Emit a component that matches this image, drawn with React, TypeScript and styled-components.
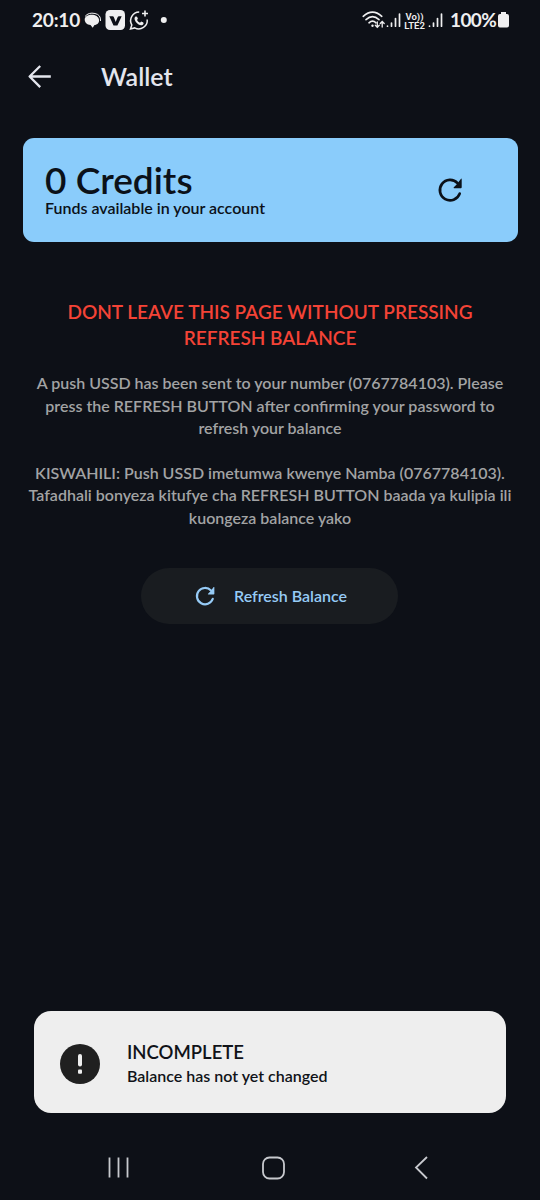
import React from "react";
import styled, { createGlobalStyle } from "styled-components";

const GlobalStyle = createGlobalStyle`
  * { box-sizing: border-box; }
  body { margin: 0; background: #0d1017; }
  svg { display: block; flex: none; }
`;

const Screen = styled.div`
  width: 540px;
  height: 1200px;
  display: flex;
  flex-direction: column;
  background: #0d1017;
  color: #e4e6ee;
  font-family: Lato, "Open Sans", sans-serif;
  font-weight: 500;
  overflow: hidden;
`;

const Line = styled.span<{ $spacing?: number }>`
  display: block;
  white-space: nowrap;
  letter-spacing: ${(p) => p.$spacing ?? 0}px;
`;

const StatusBar = styled.header`
  height: 40px;
  padding: 0 31px 0 32px;
  display: flex;
  align-items: center;
  justify-content: space-between;
  color: #efeff0;
`;

const StatusGroup = styled.div`
  display: flex;
  align-items: center;
`;

const StatusText = styled.span<{ $width: number; $spacing: number }>`
  width: ${(p) => p.$width}px;
  font-size: 19px;
  line-height: 40px;
  font-weight: 700;
  white-space: nowrap;
  letter-spacing: ${(p) => p.$spacing}px;
`;

const AppBar = styled.div`
  height: 72px;
  padding-left: 27px;
  display: flex;
  align-items: center;
  gap: 49px;
`;

const Title = styled.h1`
  margin: 0;
  font-size: 25px;
  line-height: 32px;
  font-weight: 600;
`;

const BalanceCard = styled.section`
  height: 104px;
  margin: 26px 22px 0 23px;
  padding: 0 53px 0 22px;
  border-radius: 11px;
  background: #8accfb;
  color: #0b1119;
  display: flex;
  align-items: center;
  justify-content: space-between;
`;

const Amount = styled.div`
  font-size: 37px;
  line-height: 36px;
  font-weight: 600;
`;

const Caption = styled.div`
  font-size: 16px;
  line-height: 20px;
  font-weight: 600;
`;

const Warning = styled.p`
  margin: 57px 0 0;
  text-align: center;
  color: #f44336;
  font-size: 19px;
  line-height: 25.5px;
  font-weight: 600;
`;

const Message = styled.p<{ $top: number }>`
  margin: ${(p) => p.$top}px 0 0;
  display: flex;
  flex-direction: column;
  align-items: center;
  color: #a2a3a4;
  font-size: 16px;
  line-height: 22.5px;
  font-weight: 600;
`;

const RefreshButton = styled.button`
  width: 257px;
  height: 56px;
  margin: 39px auto 0 141px;
  padding: 0 0 0 52px;
  border: 0;
  border-radius: 28px;
  display: flex;
  align-items: center;
  gap: 17px;
  background: #191c20;
  color: #96cbf6;
  font: 600 16px/22px Lato, sans-serif;
`;

const Toast = styled.aside`
  height: 102px;
  margin: auto 34px 0;
  padding-left: 24px;
  border-radius: 17px;
  display: flex;
  align-items: center;
  gap: 24px;
  background: #eee;
  color: #101318;
`;

const ToastTitle = styled.div`
  font-size: 18.5px;
  line-height: 28px;
  font-weight: 600;
`;

const NavBar = styled.nav`
  height: 87px;
  padding: 42px 110px 0 107px;
  display: flex;
  justify-content: space-between;
`;

const RefreshIcon = ({ size }: { size: number }) => (
  <svg width={size} height={size} viewBox="0 0 30 30" fill="none">
    <path d="M24.7 18.6A10.2 10.2 0 1 1 22.5 8.1" stroke="currentColor" strokeWidth="2.7" strokeLinecap="round" />
    <path d="M25.8 3.9q.9-.7.9.3v8.1q0 .9-.9.9h-6.6q-1.1 0-.4-.9l2.8-2.8z" fill="currentColor" />
  </svg>
);

const BackIcon = () => (
  <svg width="25" height="25" viewBox="0 0 25 25" fill="none" stroke="currentColor" strokeWidth="2.3" strokeLinejoin="round">
    <path d="M13.2 2 2.6 12.5l10.6 10.6M2.6 12.5h21.2" />
  </svg>
);

const NotificationIcons = () => (
  <svg width="88" height="24" viewBox="0 0 88 24">
    <path d="M4 8.5Q7.500 4 14 5.500 20 6.700 19.500 13" fill="none" stroke="#efeff0" strokeWidth="1" />
    <path d="M3.700 11.500C3.700 5 17.800 4.800 18.100 12.200c.1 3.200-2.200 4.500-4.600 4.800l-1.800 2.800-2.200-2.700c-3.500-.5-5.800-2.600-5.800-5.600Z" fill="#efeff0" />
    <rect x="24.500" y="2" width="19.500" height="20" rx="4.500" fill="#efeff0" />
    <path d="m28.300 8.200h3.300q1 0 1.300 1l1.800 4.700 1.900-4.700q.4-1 1.400-1h2.700l-4.300 9.200h-3.900z" fill="#0d1017" />
    <path d="M58.200 4.100a8.600 8.600 0 0 0-7.400 12.900l-1.300 4 4.200-1.100A8.500 8.500 0 0 0 66.200 11.500" fill="none" stroke="#efeff0" strokeWidth="1.500" />
    <path d="M54.600 8.600c1.500-.8 1.900.8 2.300 2.200l-.9 1.100q1.100 2 3 2.900l1.200-1.200c1.400.5 2.800 1 2.300 2.200-1.400 2.900-5.300 1-7.200-1.300-1.600-1.900-2.600-4.500-.7-5.900z" fill="#efeff0" />
    <path d="M64 2.500v6M61 5.500h6" stroke="#efeff0" strokeWidth="1.600" />
    <circle cx="82.800" cy="12" r="3" fill="#efeff0" />
  </svg>
);

const WifiIcon = () => (
  <svg width="24" height="20" viewBox="0 0 24 20" fill="none" stroke="currentColor" strokeWidth="1.600" strokeLinecap="round">
    <path d="M1.200 6.300Q10.500-2.200 19.800 6.300M4 9.600q6.500-5.900 13 0M7 12.800q3.500-3.300 7 0" />
    <circle cx="10.500" cy="15.700" r="1.200" fill="currentColor" stroke="none" />
    <path d="M15.300 11.800v5.500m-2-2 2 2 2-2M20.200 17v-5.500m-2 2 2-2 2 2" strokeWidth="1.300" />
  </svg>
);

const SignalIcon = () => (
  <svg width="16" height="16" viewBox="0 0 16 16" stroke="currentColor" strokeWidth="1.700" strokeLinecap="round">
    <path d="M1.500 14v.2M5.500 11v3.200M9.500 6.500v7.700M13.500 2v12.200" />
  </svg>
);

const NetworkLabel = styled.span`
  width: 21px;
  margin: 1px 3px 0 2px;
  text-align: center;
  font: 600 9.500px/9px Roboto, sans-serif;
`;

const BatteryIcon = () => (
  <svg width="11" height="16" viewBox="0 0 11 16" fill="currentColor">
    <path d="M3 0h5v2h1q2 0 2 2v9.500q0 2-2 2H2q-2 0-2-2V4q0-2 2-2h1z" />
  </svg>
);

export default function App() {
  return (
    <Screen>
      <GlobalStyle />
      <StatusBar>
        <StatusGroup>
          <StatusText $width={49} $spacing={-0.2}>20:10</StatusText>
          <NotificationIcons />
        </StatusGroup>
        <StatusGroup>
          <WifiIcon />
          <SignalIcon />
          <NetworkLabel>
            <Line>Vo))</Line>
            <Line>LTE2</Line>
          </NetworkLabel>
          <SignalIcon />
          <StatusText $width={48} $spacing={-0.6} style={{ marginLeft: 6 }}>100%</StatusText>
          <BatteryIcon />
        </StatusGroup>
      </StatusBar>
      <AppBar>
        <BackIcon />
        <Title>Wallet</Title>
      </AppBar>
      <BalanceCard>
        <div>
          <Amount>0 Credits</Amount>
          <Caption>Funds available in your account</Caption>
        </div>
        <RefreshIcon size={30} />
      </BalanceCard>
      <Warning>
        <Line>DONT LEAVE THIS PAGE WITHOUT PRESSING</Line>
        <Line>REFRESH BALANCE</Line>
      </Warning>
      <Message $top={22}>
        <Line>A push USSD has been sent to your number (0767784103). Please</Line>
        <Line>press the REFRESH BUTTON after confirming your password to</Line>
        <Line>refresh your balance</Line>
      </Message>
      <Message $top={22}>
        <Line>KISWAHILI: Push USSD imetumwa kwenye Namba (0767784103).</Line>
        <Line>Tafadhali bonyeza kitufye cha REFRESH BUTTON baada ya kulipia ili</Line>
        <Line>kuongeza balance yako</Line>
      </Message>
      <RefreshButton>
        <RefreshIcon size={24} />
        Refresh Balance
      </RefreshButton>
      <Toast>
        <svg width="45" height="45" viewBox="0 0 45 45">
          <circle cx="22" cy="24" r="20" fill="#202020" />
          <path d="M22 16v8.500" stroke="#eee" strokeWidth="4" strokeLinecap="round" />
          <rect x="20" y="29.500" width="4" height="4.200" rx="1" fill="#eee" />
        </svg>
        <div>
          <ToastTitle>INCOMPLETE</ToastTitle>
          <Caption>Balance has not yet changed</Caption>
        </div>
      </Toast>
      <NavBar>
        <svg width="24" height="26" viewBox="0 0 24 26" stroke="#c7c9ce" strokeWidth="1.800">
          <path d="M2.500 2.500v20M11.500 2.500v20M20.500 2.500v20" />
        </svg>
        <svg width="26" height="26" viewBox="0 0 26 26" fill="none" stroke="#c7c9ce" strokeWidth="1.800">
          <rect x="3" y="2.500" width="21" height="21" rx="6.500" />
        </svg>
        <svg width="16" height="26" viewBox="0 0 16 26" fill="none" stroke="#c7c9ce" strokeWidth="1.800">
          <path d="M13 2 2 12.500 13 23.500" />
        </svg>
      </NavBar>
    </Screen>
  );
}
